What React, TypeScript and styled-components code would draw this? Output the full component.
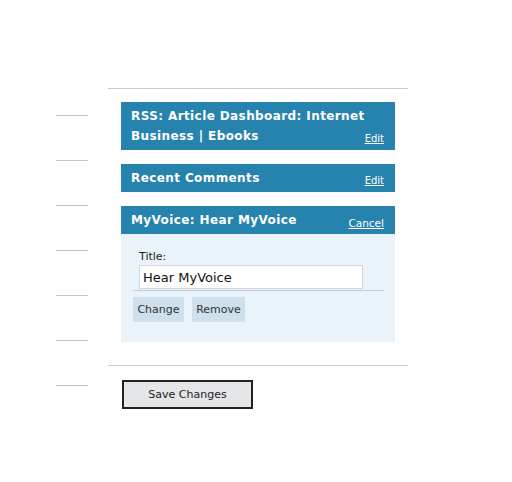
import React from "react";
import styled, { createGlobalStyle } from "styled-components";

const Global = createGlobalStyle`
  html, body { margin: 0; padding: 0; background: #fff; }
  body { font-family: "DejaVu Sans", Verdana, sans-serif; }
`;

const Page = styled.div`
  display: flex;
  align-items: flex-start;
  width: 512px;
  height: 482px;
`;

const Markers = styled.div`
  display: flex;
  flex-direction: column;
  gap: 44px;
  padding: 115px 0 0 56px;
  width: 32px;
`;

const Marker = styled.div`
  height: 1px;
  width: 32px;
  background: #c4c4c4;
`;

const Main = styled.div`
  margin: 88px 0 0 20px;
  width: 300px;
`;

const Rule = styled.div`
  height: 1px;
  background: #cccccc;
`;

const WidgetList = styled.div`
  display: flex;
  flex-direction: column;
  gap: 13.5px;
  padding: 13px 0 23px 13px;
  width: 274px;
`;

const Widget = styled.div`
  display: flex;
  flex-direction: column;
`;

const Header = styled.div`
  display: flex;
  align-items: flex-end;
  justify-content: space-between;
  background: #2683ae;
  color: #fff;
  padding: 5px 11px 4px 10px;
`;

const Title = styled.div`
  font-weight: bold;
  font-size: 12px;
  letter-spacing: 0.4px;
  line-height: 19.5px;
  white-space: nowrap;
  flex: 1;
  min-width: 0;
`;

const Action = styled.a<{ $small?: boolean }>`
  color: #fff;
  text-decoration: underline;
  font-size: ${(p) => (p.$small ? "10px" : "10.5px")};
  line-height: 14px;
  margin-left: 4px;
  cursor: pointer;
`;

const Body = styled.div`
  background: #eaf2fa;
  padding: 16px 11px 20px 12px;
  display: flex;
  flex-direction: column;
`;

const Label = styled.label`
  font-size: 11px;
  color: #222;
  margin-left: 6px;
  line-height: 14px;
`;

const Input = styled.input`
  box-sizing: border-box;
  margin: 1px 0 0 6px;
  width: 224px;
  height: 24px;
  border: 1px solid #cfd5da;
  background: #fff;
  font-family: "DejaVu Sans", Verdana, sans-serif;
  font-size: 13px;
  color: #111;
  padding: 1px 3px;
  outline: none;
`;

const ButtonRow = styled.div`
  display: flex;
  gap: 8px;
  border-top: 1px solid #c8ccd0;
  margin-top: 1px;
  padding-top: 6px;
`;

const SmallButton = styled.button<{ $w: number }>`
  width: ${(p) => p.$w}px;
  height: 25px;
  border: none;
  background: #cee0ec;
  color: #333;
  font-family: "DejaVu Sans", Verdana, sans-serif;
  font-size: 11px;
  padding: 0;
`;

const SaveRow = styled.div`
  padding: 14px 0 0 14px;
`;

const SaveButton = styled.button`
  box-sizing: border-box;
  width: 131px;
  height: 29px;
  border: 2px solid #222;
  background: #e4e6e8;
  color: #222;
  font-family: "DejaVu Sans", Verdana, sans-serif;
  font-size: 11px;
`;

export default function App() {
  return (
    <>
      <Global />
      <Page>
        <Markers>
          {Array.from({ length: 7 }).map((_, i) => (
            <Marker key={i} />
          ))}
        </Markers>
        <Main>
          <Rule />
          <WidgetList>
            <Widget>
              <Header>
                <Title>
                  RSS: Article Dashboard: Internet
                  <br />
                  Business | Ebooks
                </Title>
                <Action $small>Edit</Action>
              </Header>
            </Widget>
            <Widget>
              <Header>
                <Title>Recent Comments</Title>
                <Action $small>Edit</Action>
              </Header>
            </Widget>
            <Widget>
              <Header>
                <Title>MyVoice: Hear MyVoice</Title>
                <Action>Cancel</Action>
              </Header>
              <Body>
                <Label>Title:</Label>
                <Input defaultValue="Hear MyVoice" />
                <ButtonRow>
                  <SmallButton $w={51}>Change</SmallButton>
                  <SmallButton $w={53}>Remove</SmallButton>
                </ButtonRow>
              </Body>
            </Widget>
          </WidgetList>
          <Rule />
          <SaveRow>
            <SaveButton>Save Changes</SaveButton>
          </SaveRow>
        </Main>
      </Page>
    </>
  );
}
